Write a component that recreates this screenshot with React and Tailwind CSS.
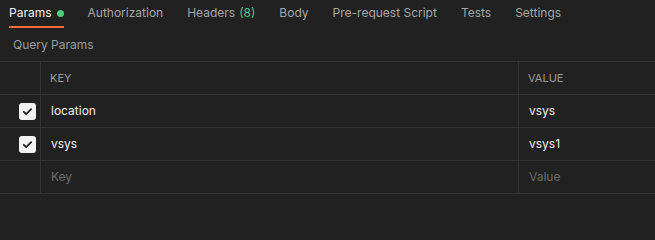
import React from "react";

const tabs = [
  { label: "Params", active: true, dot: true },
  { label: "Authorization" },
  { label: "Headers", count: "(8)" },
  { label: "Body" },
  { label: "Pre-request Script" },
  { label: "Tests" },
  { label: "Settings" },
];

const rows = [
  { key: "location", value: "vsys", checked: true },
  { key: "vsys", value: "vsys1", checked: true },
];

function Checkbox() {
  return (
    <span className="flex h-[17px] w-[17px] items-center justify-center rounded-[3px] bg-[#f2f2f2]">
      <svg width="11" height="11" viewBox="0 0 12 12" fill="none">
        <path d="M2 6.3l2.6 2.6L10 3.4" stroke="#212121" strokeWidth="2" strokeLinecap="round" strokeLinejoin="round" />
      </svg>
    </span>
  );
}

export default function App() {
  return (
    <div
      className="h-[240px] w-[655px] overflow-hidden bg-[#212121] text-[12px]"
      style={{ fontFamily: "Inter, 'Noto Sans', sans-serif" }}
    >
      <div className="flex h-[28px] gap-[24px] px-[9px]">
        {tabs.map((t) => (
          <div
            key={t.label}
            className={
              "flex items-center gap-[5px] " +
              (t.active ? "border-b-2 border-[#ff6c37] text-[#f0f0f0]" : "border-b-2 border-transparent text-[#a6a6a6]")
            }
          >
            <span>{t.label}</span>
            {t.dot && <span className="h-[7px] w-[7px] rounded-full bg-[#4ecb7e]" />}
            {t.count && <span className="-ml-[1px] text-[#4ecb7e]">{t.count}</span>}
          </div>
        ))}
      </div>
      <div className="flex h-[33px] items-center px-[13px] text-[#9b9b9b]">Query Params</div>
      <div className="border-t border-[#333333]">
        <div className="flex h-[33px] border-b border-[#333333] text-[11px] text-[#9b9b9b]">
          <div className="w-[41px] border-r border-[#333333]" />
          <div className="flex w-[478px] items-center border-r border-[#333333] px-[9px]">KEY</div>
          <div className="flex flex-1 items-center px-[9px]">VALUE</div>
        </div>
        {rows.map((r) => (
          <div key={r.key} className="flex h-[33px] border-b border-[#333333] text-[#ededed]">
            <div className="flex w-[41px] items-center border-r border-[#333333] pl-[19px]">
              {r.checked && <Checkbox />}
            </div>
            <div className="flex w-[478px] items-center border-r border-[#333333] px-[10px]">{r.key}</div>
            <div className="flex flex-1 items-center px-[10px]">{r.value}</div>
          </div>
        ))}
        <div className="flex h-[33px] border-b border-[#333333] text-[#6b6b6b]">
          <div className="w-[41px] border-r border-[#333333]" />
          <div className="flex w-[478px] items-center border-r border-[#333333] px-[10px]">Key</div>
          <div className="flex flex-1 items-center px-[10px]">Value</div>
        </div>
      </div>
    </div>
  );
}
